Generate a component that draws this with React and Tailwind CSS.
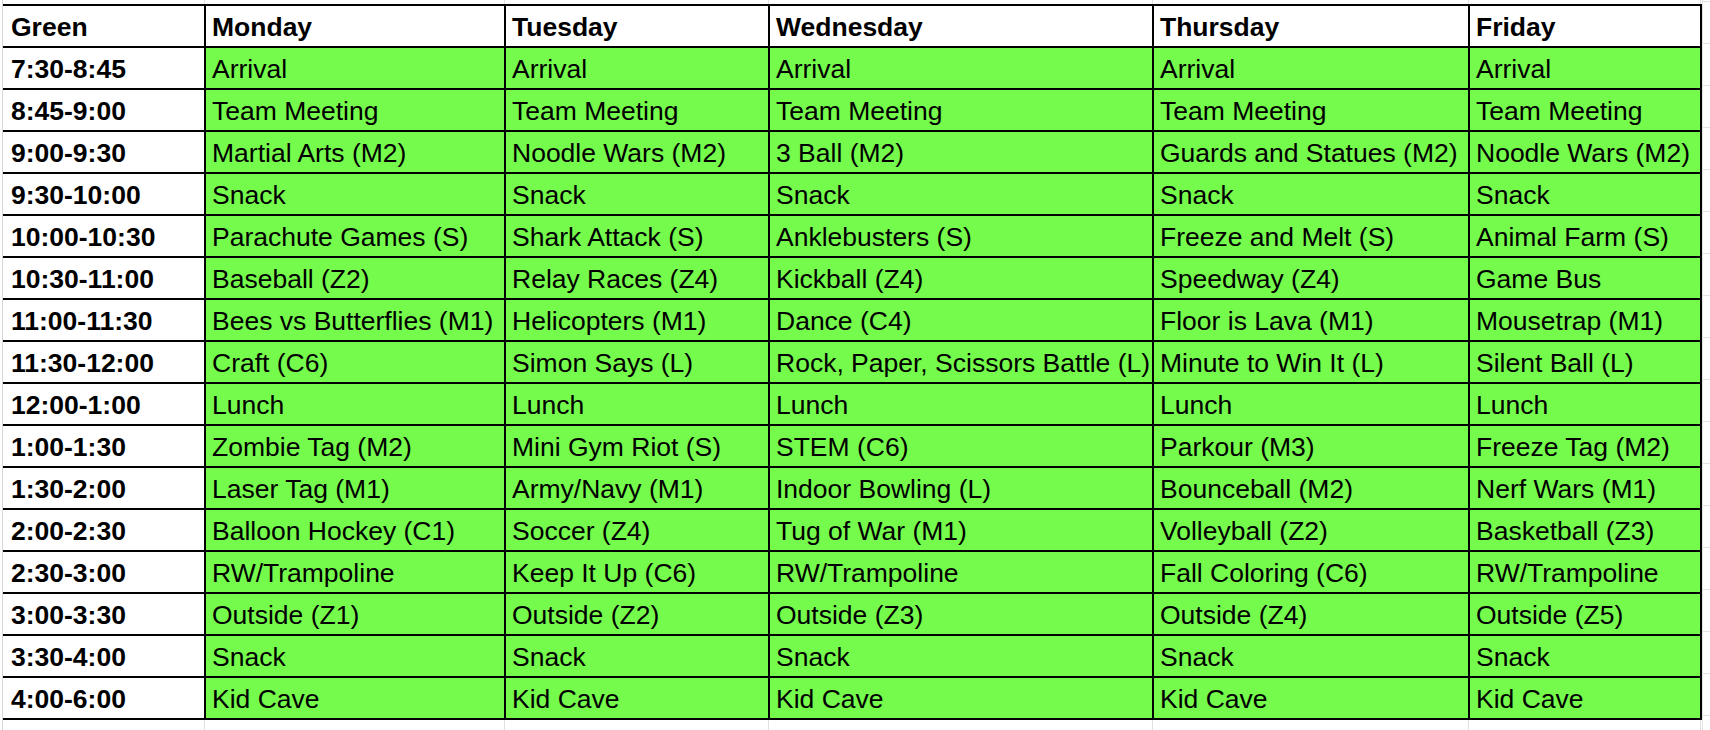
import React from "react"

const days = ["Monday", "Tuesday", "Wednesday", "Thursday", "Friday"]

const rows = [
  ["7:30-8:45", ["Arrival", "Arrival", "Arrival", "Arrival", "Arrival"]],
  ["8:45-9:00", ["Team Meeting", "Team Meeting", "Team Meeting", "Team Meeting", "Team Meeting"]],
  ["9:00-9:30", ["Martial Arts (M2)", "Noodle Wars (M2)", "3 Ball (M2)", "Guards and Statues (M2)", "Noodle Wars (M2)"]],
  ["9:30-10:00", ["Snack", "Snack", "Snack", "Snack", "Snack"]],
  ["10:00-10:30", ["Parachute Games (S)", "Shark Attack (S)", "Anklebusters (S)", "Freeze and Melt (S)", "Animal Farm (S)"]],
  ["10:30-11:00", ["Baseball (Z2)", "Relay Races (Z4)", "Kickball (Z4)", "Speedway (Z4)", "Game Bus"]],
  ["11:00-11:30", ["Bees vs Butterflies (M1)", "Helicopters (M1)", "Dance (C4)", "Floor is Lava (M1)", "Mousetrap (M1)"]],
  ["11:30-12:00", ["Craft (C6)", "Simon Says (L)", "Rock, Paper, Scissors Battle (L)", "Minute to Win It (L)", "Silent Ball (L)"]],
  ["12:00-1:00", ["Lunch", "Lunch", "Lunch", "Lunch", "Lunch"]],
  ["1:00-1:30", ["Zombie Tag (M2)", "Mini Gym Riot (S)", "STEM (C6)", "Parkour (M3)", "Freeze Tag (M2)"]],
  ["1:30-2:00", ["Laser Tag (M1)", "Army/Navy (M1)", "Indoor Bowling (L)", "Bounceball (M2)", "Nerf Wars (M1)"]],
  ["2:00-2:30", ["Balloon Hockey (C1)", "Soccer (Z4)", "Tug of War (M1)", "Volleyball (Z2)", "Basketball (Z3)"]],
  ["2:30-3:00", ["RW/Trampoline", "Keep It Up (C6)", "RW/Trampoline", "Fall Coloring (C6)", "RW/Trampoline"]],
  ["3:00-3:30", ["Outside (Z1)", "Outside (Z2)", "Outside (Z3)", "Outside (Z4)", "Outside (Z5)"]],
  ["3:30-4:00", ["Snack", "Snack", "Snack", "Snack", "Snack"]],
  ["4:00-6:00", ["Kid Cave", "Kid Cave", "Kid Cave", "Kid Cave", "Kid Cave"]],
]

// widths of the gray spreadsheet gridline strips above / below the table
const stripCols = ["w-[202px]", "w-[300px]", "w-[264px]", "w-[384px]", "w-[316px]", "w-[232px]"]

function GridStrip({ className }) {
  return (
    <div className={"flex " + className}>
      {stripCols.map((w, i) => (
        <div key={i} className={w + " border-r border-[#e1e1e1]"} />
      ))}
    </div>
  )
}

export default function App() {
  return (
    <div
      className="flex h-[730px] w-[1710px] overflow-hidden bg-white text-black"
      style={{ fontFamily: '"Liberation Sans", Arial, sans-serif' }}
    >
      {/* left sheet gridline */}
      <div className="w-[3px] shrink-0 border-r border-[#d6d6d6]" />

      <div className="flex flex-col">
        <GridStrip className="h-[4px] shrink-0" />

        <div className="grid grid-cols-[201px_298px_262px_382px_314px_230px] auto-rows-[40px] gap-[2px] bg-black py-[2px] pr-[2px]">
          <div className="overflow-hidden bg-white pl-[8px] text-[26.5px] font-bold leading-[42px]">Green</div>
          {days.map((d) => (
            <div key={d} className="overflow-hidden bg-white pl-[6px] text-[26.5px] font-bold leading-[42px]">
              {d}
            </div>
          ))}

          {rows.map(([time, cells]) => (
            <React.Fragment key={time}>
              <div className="overflow-hidden bg-white pl-[8px] text-[26.5px] font-bold leading-[42px]">{time}</div>
              {cells.map((c, i) => (
                <div
                  key={i}
                  className="overflow-hidden whitespace-nowrap bg-[#75fb4c] pl-[6px] text-[26.5px] leading-[42px]"
                >
                  {c}
                </div>
              ))}
            </React.Fragment>
          ))}
        </div>

        <GridStrip className="flex-1" />
      </div>

      {/* right side gridlines */}
      <div className="flex flex-1 flex-col border-l border-[#e1e1e1]">
        <div className="h-[2px] shrink-0 border-b border-[#e1e1e1]" />
        {Array.from({ length: 17 }).map((_, i) => (
          <div key={i} className="h-[42px] shrink-0 border-b border-[#e1e1e1]" />
        ))}
      </div>
    </div>
  )
}
